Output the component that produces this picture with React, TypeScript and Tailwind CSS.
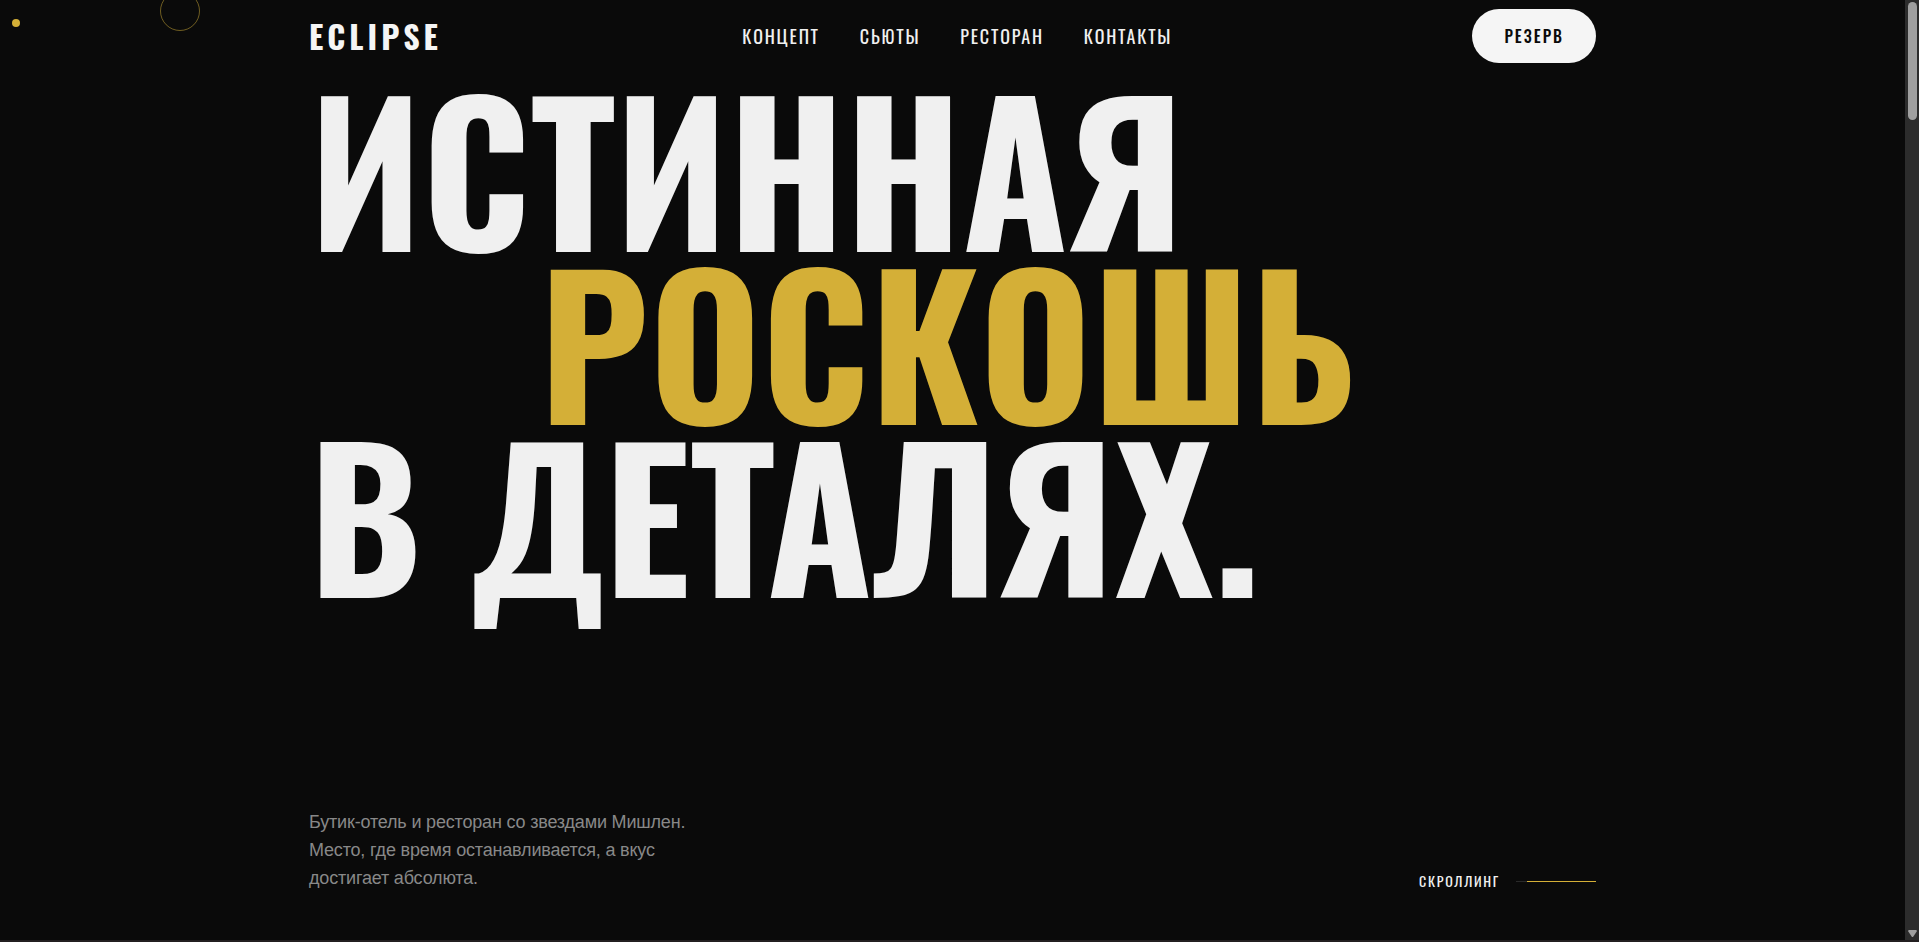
const navLinks = [
  { label: "Концепт", href: "#concept" },
  { label: "Сьюты", href: "#suites" },
  { label: "Ресторан", href: "#restaurant" },
  { label: "Контакты", href: "#contacts" },
];

function CursorTrail() {
  return (
    <div aria-hidden="true" className="pointer-events-none">
      <span className="absolute top-[19px] left-3 size-2 rounded-full bg-[#d4af37]" />
      <span className="absolute top-[-9px] left-40 size-10 rounded-full border border-[#d4af37]/50" />
    </div>
  );
}

function Header() {
  return (
    <header className="mx-auto flex h-[72px] w-full max-w-[1287px] items-center justify-between font-['Oswald',sans-serif] uppercase">
      <a href="#top" className="text-[32px] leading-[48px] font-bold tracking-[4px] text-[#f5f5f5]">
        Eclipse
      </a>

      <nav className="flex items-center gap-10 text-[18px] leading-6 tracking-widest text-[#f0f0f0]">
        {navLinks.map((link) => (
          <a key={link.href} href={link.href} className="transition hover:text-[#d4af37]">
            {link.label}
          </a>
        ))}
      </nav>

      <button
        type="button"
        className="h-[54px] rounded-full bg-[#f5f5f5] px-8 text-base font-medium tracking-[2px] text-[#0a0a0a] uppercase transition hover:bg-[#d4af37]"
      >
        Резерв
      </button>
    </header>
  );
}

function Hero() {
  return (
    <main className="mx-auto flex w-full max-w-[1287px] grow flex-col justify-between pt-[7px] pb-12">
      <h1 className="font-['Oswald',sans-serif] text-[192px] leading-[0.9] font-bold whitespace-nowrap text-[#f0f0f0] uppercase">
        <span className="block">Истинная</span>
        <span className="block pl-[12vw] text-[#d4af37]">Роскошь</span>
        <span className="block">в деталях.</span>
      </h1>

      <div className="flex items-end justify-between">
        <p className="w-[400px] font-['Liberation_Sans',sans-serif] text-[18px] leading-7 tracking-[-0.01em] text-[#888888]">
          Бутик-отель и ресторан со звездами Мишлен. Место, где время останавливается, а вкус достигает абсолюта.
        </p>

        <a
          href="#concept"
          className="flex items-center gap-4 font-['Oswald',sans-serif] text-sm leading-[22px] tracking-[0.12em] text-[#f0f0f0] uppercase"
        >
          Скроллинг
          <span className="flex h-px w-20 justify-end bg-[#2a2a2a]">
            <span className="h-px w-[69px] bg-[#d4af37]" />
          </span>
        </a>
      </div>
    </main>
  );
}

function ScrollRail() {
  return (
    <div aria-hidden="true" className="flex w-3.5 shrink-0 flex-col items-center justify-between bg-[#2c2c2c] pt-0.5 pb-[3px]">
      <span className="h-[118px] w-[9px] rounded-full bg-[#9f9f9f]" />
      <svg viewBox="0 0 9 7" className="h-[7px] w-[9px] fill-[#9f9f9f]">
        <path d="M0.8 0h7.4q1 .6.5 1.6L5.4 6.4q-.9 1-1.8 0L.3 1.6Q-.2.6.8 0Z" />
      </svg>
    </div>
  );
}

export default function App() {
  return (
    <div id="top" className="flex min-h-screen flex-col overflow-hidden border-b-2 border-[#231f20] bg-[#0a0a0a]">
      <div className="relative flex grow">
        <div className="flex min-w-0 grow flex-col">
          <Header />
          <Hero />
        </div>
        <ScrollRail />
        <CursorTrail />
      </div>
    </div>
  );
}
